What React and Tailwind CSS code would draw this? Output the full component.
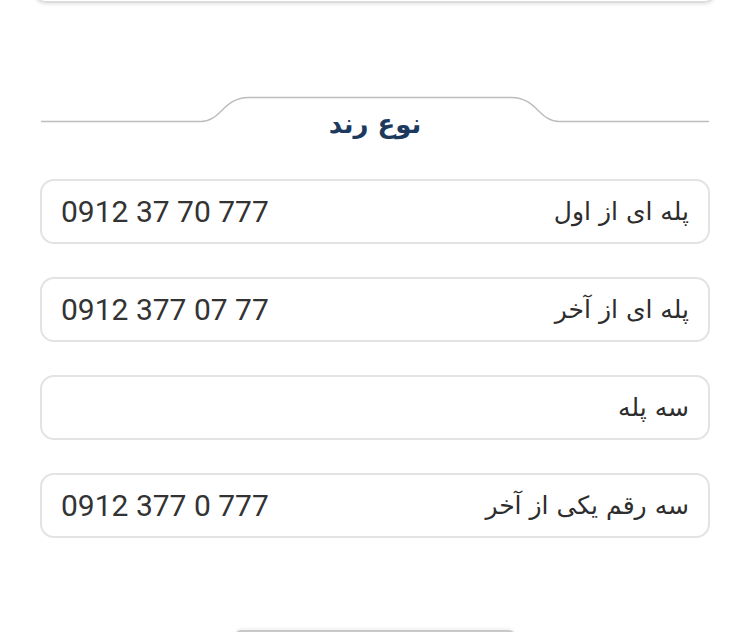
const rows = [
  { label: 'پله ای از اول', value: '0912 37 70 777' },
  { label: 'پله ای از آخر', value: '0912 377 07 77' },
  { label: 'سه پله', value: '' },
  { label: 'سه رقم یکی از آخر', value: '0912 377 0 777' },
]

function SectionTitle({ title }) {
  return (
    <div className="relative mx-[41px] h-[50px]">
      <svg className="absolute inset-0" width="668" height="50" viewBox="0 0 668 50" fill="none">
        <path
          d="M0 25.5 H160 C180 25.5 182 1.5 208 1.5 H470 C496 1.5 498 25.5 518 25.5 H668"
          stroke="#bdbdbd"
          strokeWidth="1.5"
        />
      </svg>
      <div
        className="relative pt-[10px] text-center text-[26px] font-bold leading-[36px] text-[#1d3a5e]"
        style={{ fontFamily: '"DejaVu Sans", sans-serif' }}
        dir="rtl"
      >
        {title}
      </div>
    </div>
  )
}

function OptionRow({ label, value }) {
  return (
    <div className="flex h-[65px] items-center justify-between rounded-[14px] border-2 border-[#e3e3e3] bg-white px-[19px]" dir="rtl">
      <span className="text-[25px] text-[#2d2d2d]" style={{ fontFamily: '"DejaVu Sans", sans-serif' }}>
        {label}
      </span>
      <span className="text-[30px] text-[#333]" style={{ fontFamily: 'Roboto, sans-serif' }} dir="ltr">
        {value}
      </span>
    </div>
  )
}

export default function App() {
  return (
    <div className="relative h-[632px] w-[750px] overflow-hidden bg-white">
      <div className="mx-[33px] -mt-[10px] h-[13px] rounded-b-[14px] border-b-2 border-[#dcdcdc] shadow-[0_2px_3px_rgba(0,0,0,0.08)]" />
      <div className="mt-[93px]">
        <SectionTitle title="نوع رند" />
      </div>
      <div className="mx-[40px] mt-[33px] flex flex-col gap-[33px]">
        {rows.map((r) => (
          <OptionRow key={r.label} label={r.label} value={r.value} />
        ))}
      </div>
      <div className="mx-auto mt-[92px] h-[6px] w-[280px] rounded-t-[10px] border-t-2 border-[#c8c8c8] shadow-[0_-2px_3px_rgba(0,0,0,0.05)]" />
    </div>
  )
}
